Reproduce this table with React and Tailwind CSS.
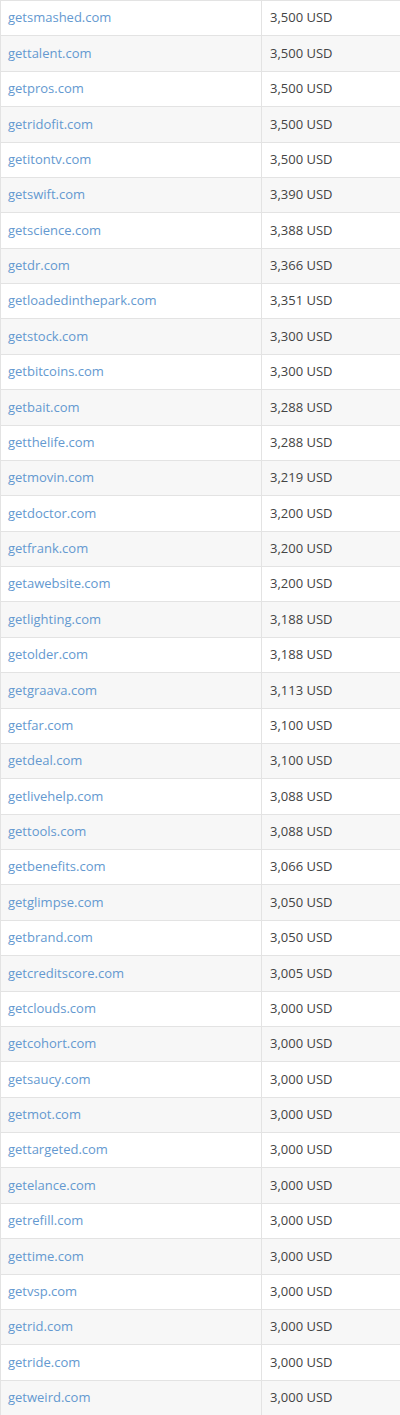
const rows = [
  ["getsmashed.com", "3,500 USD"],
  ["gettalent.com", "3,500 USD"],
  ["getpros.com", "3,500 USD"],
  ["getridofit.com", "3,500 USD"],
  ["getitontv.com", "3,500 USD"],
  ["getswift.com", "3,390 USD"],
  ["getscience.com", "3,388 USD"],
  ["getdr.com", "3,366 USD"],
  ["getloadedinthepark.com", "3,351 USD"],
  ["getstock.com", "3,300 USD"],
  ["getbitcoins.com", "3,300 USD"],
  ["getbait.com", "3,288 USD"],
  ["getthelife.com", "3,288 USD"],
  ["getmovin.com", "3,219 USD"],
  ["getdoctor.com", "3,200 USD"],
  ["getfrank.com", "3,200 USD"],
  ["getawebsite.com", "3,200 USD"],
  ["getlighting.com", "3,188 USD"],
  ["getolder.com", "3,188 USD"],
  ["getgraava.com", "3,113 USD"],
  ["getfar.com", "3,100 USD"],
  ["getdeal.com", "3,100 USD"],
  ["getlivehelp.com", "3,088 USD"],
  ["gettools.com", "3,088 USD"],
  ["getbenefits.com", "3,066 USD"],
  ["getglimpse.com", "3,050 USD"],
  ["getbrand.com", "3,050 USD"],
  ["getcreditscore.com", "3,005 USD"],
  ["getclouds.com", "3,000 USD"],
  ["getcohort.com", "3,000 USD"],
  ["getsaucy.com", "3,000 USD"],
  ["getmot.com", "3,000 USD"],
  ["gettargeted.com", "3,000 USD"],
  ["getelance.com", "3,000 USD"],
  ["getrefill.com", "3,000 USD"],
  ["gettime.com", "3,000 USD"],
  ["getvsp.com", "3,000 USD"],
  ["getrid.com", "3,000 USD"],
  ["getride.com", "3,000 USD"],
  ["getweird.com", "3,000 USD"],
];

export default function App() {
  return (
    <div className="w-[400px] bg-white font-['Open_Sans',sans-serif] text-[13px] border-l border-[#e3e3e3]">
      {rows.map(([domain, price], i) => (
        <div
          key={domain}
          className={
            i % 2 === 0
              ? "flex h-[35.375px] items-center border-t border-[#e3e3e3] bg-white"
              : "flex h-[35.375px] items-center border-t border-[#e3e3e3] bg-[#f7f7f7]"
          }
        >
          <div className="flex h-full w-[261px] items-center border-r border-[#e3e3e3] pl-[7px]">
            <a href="#" className="text-[#6499d0]">
              {domain}
            </a>
          </div>
          <div className="pl-[8px] text-[#444]">{price}</div>
        </div>
      ))}
    </div>
  );
}
